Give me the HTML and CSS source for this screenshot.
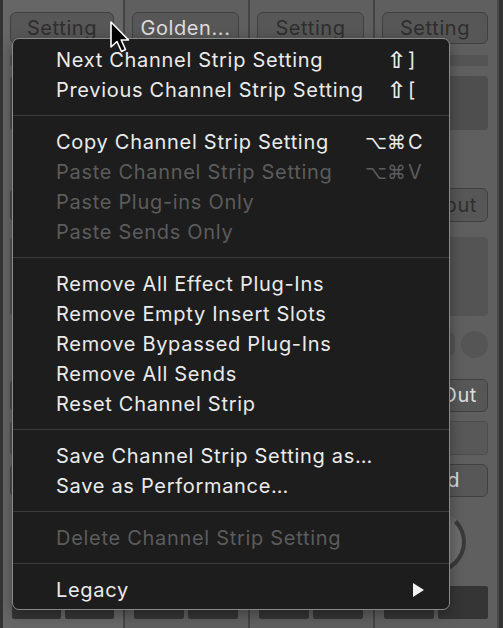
FILE: index.html
```html
<!DOCTYPE html>
<html>
<head>
    <title>Channel Strip Setting Menu</title>
    <link rel="stylesheet" href="styles.css">
</head>
<body>
    <div class="mixer">
        <div class="strip">
            <div class="btn dark-text">Setting</div>
            <div class="bar"></div>
            <div class="box plugins"></div>
            <div class="btn slot-io"></div>
            <div class="box sends"></div>
            <div class="round-row"><span class="pill"></span><span class="dot"></span></div>
            <div class="btn slot-out"></div>
            <div class="box group"></div>
            <div class="btn slot-auto"></div>
            <div class="knob"></div>
            <div class="values"><span>24.0</span><span>47.5</span></div>
        </div>
        <div class="strip">
            <div class="btn">Golden...</div>
            <div class="bar"></div>
            <div class="box plugins"></div>
            <div class="btn slot-io"></div>
            <div class="box sends"></div>
            <div class="round-row"><span class="pill"></span><span class="dot"></span></div>
            <div class="btn slot-out"></div>
            <div class="box group"></div>
            <div class="btn slot-auto"></div>
            <div class="knob"></div>
            <div class="values"><span>0.0</span><span></span></div>
        </div>
        <div class="strip">
            <div class="btn dark-text">Setting</div>
            <div class="bar"></div>
            <div class="box plugins"></div>
            <div class="btn slot-io"></div>
            <div class="box sends"></div>
            <div class="round-row"><span class="pill"></span><span class="dot"></span></div>
            <div class="btn slot-out"></div>
            <div class="box group"></div>
            <div class="btn slot-auto"></div>
            <div class="knob"></div>
            <div class="values"><span>0.0</span><span></span></div>
        </div>
        <div class="strip last">
            <div class="btn dark-text">Setting</div>
            <div class="bar"></div>
            <div class="box plugins"></div>
            <div class="btn slot-io dark-text align-right">Input</div>
            <div class="box sends"></div>
            <div class="round-row"><span class="pill"></span><span class="dot"></span></div>
            <div class="btn slot-out align-right">Out</div>
            <div class="box group"></div>
            <div class="btn slot-auto">Read</div>
            <div class="knob"></div>
            <div class="values"><span>0.0</span><span></span></div>
        </div>
    </div>

    <div class="menu">
        <div class="item"><span class="label">Next Channel Strip Setting</span><span class="keys"><span class="mods shift">&#x21E7;</span><span class="key">]</span></span></div>
        <div class="item"><span class="label">Previous Channel Strip Setting</span><span class="keys"><span class="mods shift">&#x21E7;</span><span class="key">[</span></span></div>
        <div class="sep"></div>
        <div class="item"><span class="label">Copy Channel Strip Setting</span><span class="keys"><span class="mods">&#x2325;&#x2318;</span><span class="key">C</span></span></div>
        <div class="item off"><span class="label">Paste Channel Strip Setting</span><span class="keys"><span class="mods">&#x2325;&#x2318;</span><span class="key">V</span></span></div>
        <div class="item off"><span class="label">Paste Plug-ins Only</span></div>
        <div class="item off"><span class="label">Paste Sends Only</span></div>
        <div class="sep"></div>
        <div class="item"><span class="label">Remove All Effect Plug-Ins</span></div>
        <div class="item"><span class="label">Remove Empty Insert Slots</span></div>
        <div class="item"><span class="label">Remove Bypassed Plug-Ins</span></div>
        <div class="item"><span class="label">Remove All Sends</span></div>
        <div class="item"><span class="label">Reset Channel Strip</span></div>
        <div class="sep"></div>
        <div class="item"><span class="label">Save Channel Strip Setting as…</span></div>
        <div class="item"><span class="label">Save as Performance…</span></div>
        <div class="sep"></div>
        <div class="item off"><span class="label">Delete Channel Strip Setting</span></div>
        <div class="sep"></div>
        <div class="item"><span class="label">Legacy</span><span class="arrow"></span></div>
    </div>

    <svg class="cursor" width="24" height="36" viewBox="0 0 24 36">
        <path d="M2 2 L2 27 L8 21.5 L12.5 31.5 L16.5 29.5 L12.2 20 L19.5 20 Z" fill="#000" stroke="#fff" stroke-width="1.6" stroke-linejoin="round"/>
    </svg>
</body>
</html>
```

FILE: styles.css
```css
* {
    box-sizing: border-box;
}
body {
    margin: 0;
    width: 503px;
    height: 628px;
    overflow: hidden;
    background-color: #333;
    font-family: Inter, "Liberation Sans", sans-serif;
}
.mixer {
    display: flex;
    height: 628px;
    padding-left: 3px;
}
.strip {
    width: 125px;
    height: 628px;
    background-color: #5f5f5f;
    border-right: 2px solid #444;
    padding: 12px 9px 0 7px;
    display: flex;
    flex-direction: column;
}
.strip:first-child {
    width: 122px;
    background-color: #666;
}
.strip.last {
    width: 124px;
    border-right: 2px solid #484848;
}
.btn {
    height: 32px;
    background-color: #575757;
    border: 1px solid #404040;
    border-radius: 6px;
    color: #dedede;
    font-size: 20px;
    letter-spacing: 0.6px;
    line-height: 30px;
    text-align: center;
    white-space: nowrap;
    overflow: hidden;
}
.btn.dark-text {
    color: #2e2e2e;
}
.btn.align-right {
    text-align: right;
    padding-right: 10px;
}
.bar {
    height: 11px;
    margin-top: 11px;
    background-color: #545454;
    border-radius: 2px;
}
.box {
    background-color: #4e4e4e;
    border-radius: 4px;
}
.box.plugins {
    height: 54px;
    margin-top: 10px;
}
.btn.slot-io {
    height: 34px;
    margin-top: 58px;
    line-height: 32px;
}
.box.sends {
    height: 79px;
    margin-top: 15px;
    background-color: #545454;
}
.round-row {
    height: 26px;
    margin-top: 15px;
    display: flex;
    justify-content: flex-end;
    gap: 6px;
}
.pill {
    width: 60px;
    height: 26px;
    border-radius: 8px;
    background-color: #555;
}
.dot {
    width: 27px;
    height: 27px;
    border-radius: 50%;
    background-color: #555;
}
.btn.slot-out {
    height: 33px;
    margin-top: 22px;
    line-height: 31px;
}
.box.group {
    height: 34px;
    margin-top: 9px;
    background-color: #585858;
    border: 1px solid #4c4c4c;
}
.btn.slot-auto {
    height: 33px;
    margin-top: 9px;
    line-height: 31px;
}
.knob {
    width: 62px;
    height: 62px;
    margin: 14px auto 0;
    border-radius: 50%;
    background-color: #6c6c6c;
    border: 4px solid #3a3a3a;
    border-top-color: #666;
    border-left-color: #5a5a5a;
}
.values {
    display: flex;
    gap: 4px;
    margin: 13px 0 0 2px;
}
.values span {
    width: 50px;
    height: 33px;
    background-color: #353535;
    border-radius: 2px;
    color: #bdbdbd;
    font-size: 19px;
    line-height: 33px;
    text-align: center;
}

.menu {
    position: absolute;
    left: 12px;
    top: 38px;
    width: 438px;
    padding: 6px 0 4px;
    background-color: #1d1d1d;
    border: 1px solid #8a8a8a;
    border-radius: 7px;
    box-shadow: 0 4px 14px rgba(0, 0, 0, 0.35);
    color: #ebebeb;
    font-size: 20px;
    letter-spacing: 0.7px;
}
.item {
    height: 30px;
    line-height: 30px;
    padding-left: 43px;
    display: flex;
    white-space: nowrap;
}
.item.off {
    color: #5c5c5c;
}
.label {
    flex: 1;
}
.keys {
    display: flex;
    width: 70px;
    margin-right: 25px;
}
.mods {
    flex: 1;
    text-align: right;
    font-family: "DejaVu Sans", sans-serif;
    font-size: 19px;
    letter-spacing: 0;
}
.mods.shift {
    font-size: 23px;
    font-weight: bold;
}
.key {
    width: 16px;
    margin-left: 2px;
}
.arrow {
    width: 0;
    height: 0;
    margin: 8px 25px 0 0;
    border-top: 7px solid transparent;
    border-bottom: 7px solid transparent;
    border-left: 11px solid #f2f2f2;
}
.sep {
    height: 1px;
    margin: 10px 0 11px;
    background-color: #3a3a3a;
}
.cursor {
    position: absolute;
    left: 109px;
    top: 20px;
}
```
